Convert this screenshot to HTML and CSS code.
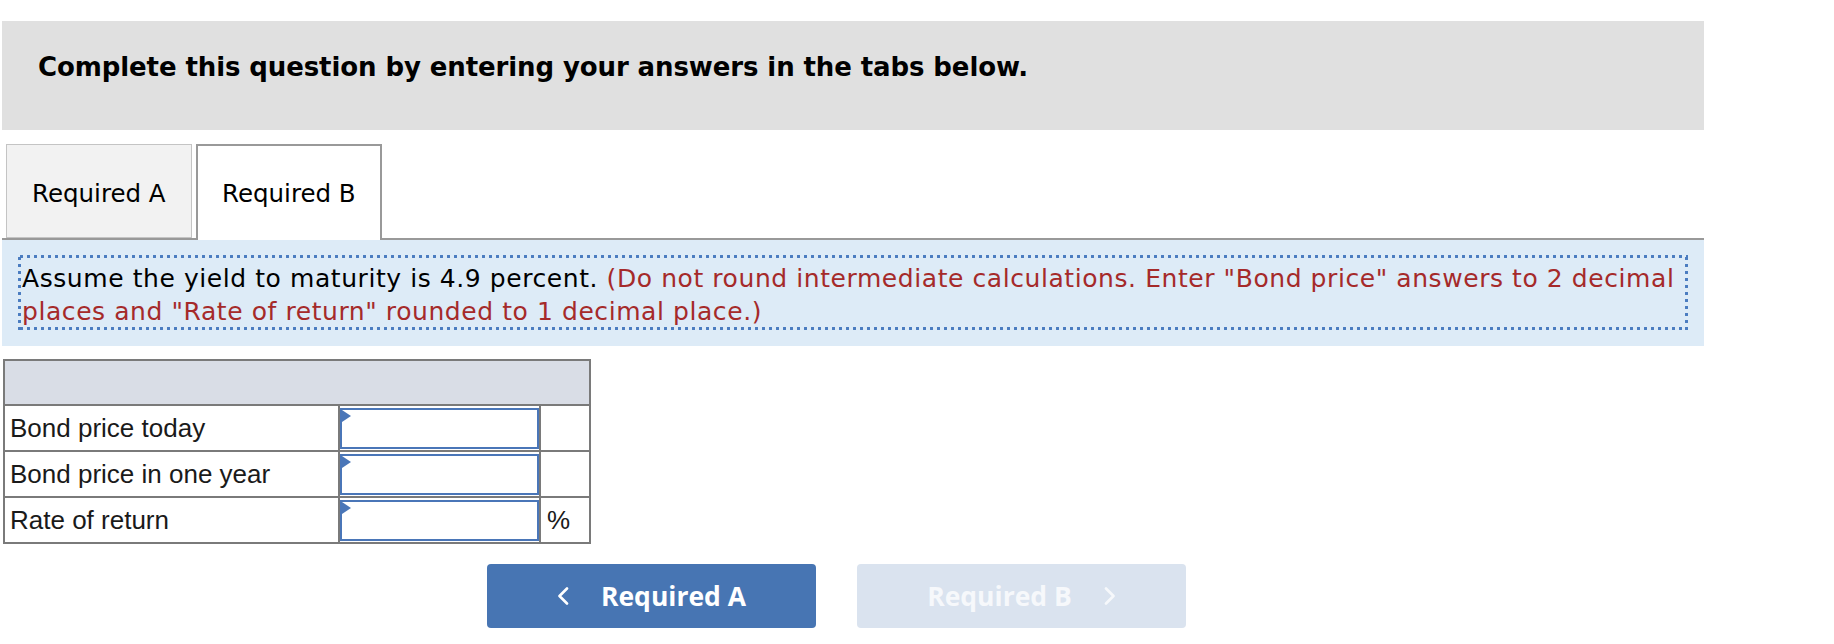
FILE: index.html
```html
<!DOCTYPE html>
<html lang="en">
<head>
<meta charset="utf-8">
<title>Required B</title>
<link rel="stylesheet" href="styles.css">
</head>
<body>
<div class="page">
  <div class="header">
    <h1 class="header-title">Complete this question by entering your answers in the tabs below.</h1>
  </div>

  <div class="tabs">
    <div class="tab tab-inactive">Required A</div>
    <div class="tab tab-active">Required B</div>
  </div>

  <div class="panel">
    <div class="note"><span class="note-main">Assume the yield to maturity is 4.9 percent.</span> <span class="note-hint">(Do not round intermediate calculations. Enter "Bond price" answers to 2 decimal</span> <span class="note-hint">places and "Rate of return" rounded to 1 decimal place.)</span></div>
  </div>

  <table class="answers">
    <colgroup>
      <col class="col-label">
      <col class="col-input">
      <col class="col-unit">
    </colgroup>
    <tr class="head-row"><td colspan="3"></td></tr>
    <tr class="row">
      <td class="label">Bond price today</td>
      <td class="input-cell"><div class="input-box"></div></td>
      <td class="unit"></td>
    </tr>
    <tr class="row">
      <td class="label">Bond price in one year</td>
      <td class="input-cell"><div class="input-box"></div></td>
      <td class="unit"></td>
    </tr>
    <tr class="row">
      <td class="label">Rate of return</td>
      <td class="input-cell"><div class="input-box"></div></td>
      <td class="unit">%</td>
    </tr>
  </table>

  <div class="nav">
    <button class="nav-btn nav-prev" type="button">
      <svg class="chev" width="12" height="18" viewBox="0 0 12 18"><polyline points="10,1.5 2.5,9 10,16.5" fill="none" stroke="currentColor" stroke-width="2.6" stroke-linecap="round" stroke-linejoin="round"/></svg>
      <span>Required A</span>
    </button>
    <button class="nav-btn nav-next" type="button">
      <span>Required B</span>
      <svg class="chev" width="12" height="18" viewBox="0 0 12 18"><polyline points="2,1.5 9.5,9 2,16.5" fill="none" stroke="currentColor" stroke-width="2.6" stroke-linecap="round" stroke-linejoin="round"/></svg>
    </button>
  </div>
</div>
</body>
</html>
```

FILE: styles.css
```css
html, body {
  margin: 0;
  padding: 0;
  background: #ffffff;
}

.page {
  width: 1702px;
  padding: 21px 0 0 2px;
}

.header {
  height: 109px;
  box-sizing: border-box;
  background: #e0e0e0;
  padding: 30px 0 0 36px;
}

.header-title {
  margin: 0;
  font-family: "DejaVu Sans", Verdana, sans-serif;
  font-weight: bold;
  font-size: 26px;
  letter-spacing: -0.1px;
  line-height: 32px;
  color: #000;
}

.tabs {
  display: flex;
  align-items: flex-start;
  gap: 4px;
  margin-top: 14px;
  padding-left: 4px;
  border-bottom: 2px solid #999999;
}

.tab {
  box-sizing: border-box;
  width: 186px;
  padding: 35px 0 0 25px;
  font-family: "DejaVu Sans", Verdana, sans-serif;
  font-size: 24.5px;
  line-height: 28px;
  color: #000;
}

.tab-inactive {
  height: 94px;
  background: #f2f2f2;
  border: 1px solid #c4c4c4;
}

.tab-active {
  height: 96px;
  margin-bottom: -2px;
  background: #ffffff;
  border: 2px solid #999999;
  border-bottom: none;
  padding-left: 24px;
  padding-top: 34px;
}

.panel {
  background: #ddebf7;
  padding: 15px 16px 16px 16px;
}

.note {
  padding: 7px 4px 2px 4px;
  font-family: "DejaVu Sans", Verdana, sans-serif;
  font-size: 25px;
  letter-spacing: 0.57px;
  line-height: 33px;
  background:
    radial-gradient(circle at 50% 50%, #4a7cc0 1.4px, rgba(74,124,192,0) 1.9px) left top / 7px 3px repeat-x,
    radial-gradient(circle at 50% 50%, #4a7cc0 1.4px, rgba(74,124,192,0) 1.9px) left bottom / 7px 3px repeat-x,
    radial-gradient(circle at 50% 50%, #4a7cc0 1.4px, rgba(74,124,192,0) 1.9px) left top / 3px 7px repeat-y,
    radial-gradient(circle at 50% 50%, #4a7cc0 1.4px, rgba(74,124,192,0) 1.9px) right top / 3px 7px repeat-y;
}

.note-main {
  color: #000;
}

.note-hint {
  color: #a52a2a;
}

.answers {
  border-collapse: collapse;
  table-layout: fixed;
  width: 586px;
  margin: 13px 0 0 1px;
  font-family: "Liberation Sans", Arial, sans-serif;
  font-size: 26px;
  color: #1a1a1a;
}

.col-label { width: 335px; }
.col-input { width: 201px; }
.col-unit { width: 50px; }

.answers td {
  border: 2px solid #7a7a7a;
  padding: 0;
}

.head-row td {
  height: 43px;
  background: #d9dde6;
}

.row td {
  height: 42px;
}

.label {
  padding: 0 0 0 5px !important;
  white-space: nowrap;
}

.unit {
  padding: 0 0 0 6px !important;
}

.input-cell {
  padding: 1px 0 1px 0 !important;
}

.input-box {
  position: relative;
  box-sizing: border-box;
  height: 41px;
  border: 2px solid #4a76b8;
  background: #ffffff;
}

.input-box::before {
  content: "";
  position: absolute;
  left: 0;
  top: 0;
  width: 0;
  height: 0;
  border-top: 6px solid transparent;
  border-bottom: 6px solid transparent;
  border-left: 9px solid #4a76b8;
}

.nav {
  display: flex;
  gap: 41px;
  margin-top: 20px;
  padding-left: 485px;
}

.nav-btn {
  box-sizing: border-box;
  width: 329px;
  height: 64px;
  border: none;
  border-radius: 4px;
  display: flex;
  align-items: center;
  justify-content: center;
  gap: 32px;
  font-family: "Open Sans", "Liberation Sans", sans-serif;
  font-weight: 700;
  font-size: 26.5px;
  letter-spacing: 0;
  padding: 0;
}

.nav-prev {
  background: #4775b3;
  color: #ffffff;
}

.nav-next {
  background: #dae3ef;
  color: #f6f8fb;
}

.chev {
  display: block;
}
```
